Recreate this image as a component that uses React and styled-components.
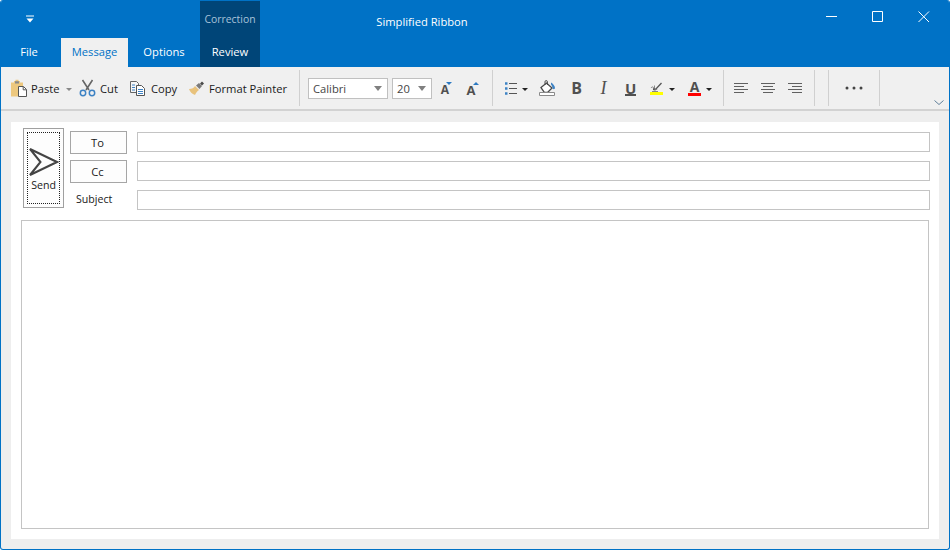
import React from 'react';
import styled, { createGlobalStyle } from 'styled-components';

const GlobalStyle = createGlobalStyle`
	html, body {
		margin: 0;
		padding: 0;
		background: #fff;
	}
	* {
		box-sizing: border-box;
	}
`;

const Window = styled.div`
	width: 950px;
	height: 550px;
	display: flex;
	flex-direction: column;
	background: #eeeeee;
	border: 1px solid #0072c6;
	border-top: 0;
	border-radius: 3px;
	overflow: hidden;
	font-family: 'Open Sans', 'Noto Sans', sans-serif;
	font-size: 11.2px;
	color: #1a1a1a;
`;

const Header = styled.div`
	height: 67px;
	flex: none;
	display: flex;
	background: #0072c6;
	color: #fff;
`;

const LeftTabs = styled.div`
	width: 199px;
	display: flex;
	flex-direction: column;
`;

const Qat = styled.div`
	height: 38px;
	padding: 15px 0 0 25px;
`;

const TabRow = styled.div`
	height: 29px;
	display: flex;
`;

const Tab = styled.div`
	width: ${p => p.$w}px;
	display: flex;
	align-items: center;
	justify-content: center;
	padding-bottom: 3px;
	padding-right: ${p => p.$shift || 0}px;
	background: ${p => (p.$active ? '#f0f0f0' : 'transparent')};
	color: ${p => (p.$active ? '#0072c6' : '#fff')};
`;

const ContextGroup = styled.div`
	width: 60px;
	margin-top: 1px;
	display: flex;
	flex-direction: column;
	background: #004578;
`;

const ContextLabel = styled.div`
	height: 37px;
	padding-top: 11px;
	text-align: center;
	font-size: 10.4px;
	color: #a9c3d8;
`;

const ContextTab = styled.div`
	height: 29px;
	display: flex;
	align-items: center;
	justify-content: center;
	padding-bottom: 3px;
`;

const Title = styled.div`
	width: 92px;
	margin: 14px 0 0 116px;
	height: 18px;
	white-space: nowrap;
	text-align: center;
`;

const WindowControls = styled.div`
	margin: 1px 2px 0 auto;
	display: flex;
	height: 32px;
`;

const ControlButton = styled.div`
	width: 46px;
	display: flex;
	align-items: center;
	justify-content: center;
`;

const Ribbon = styled.div`
	height: 44px;
	flex: none;
	display: flex;
	align-items: center;
	background: #f0f0f0;
	border-bottom: 2px solid #d2d2d2;
`;

const Group = styled.div`
	display: flex;
	align-items: center;
	padding-left: ${p => p.$pad || 0}px;
`;

const Separator = styled.div`
	width: 1px;
	height: 36px;
	flex: none;
	background: #d0d0d0;
`;

const Tool = styled.div`
	width: ${p => p.$w}px;
	height: 22px;
	flex: none;
	display: flex;
	align-items: center;
	justify-content: ${p => (p.$center ? 'center' : 'flex-start')};
	gap: ${p => p.$gap ?? 4}px;
	white-space: nowrap;
`;

const Combo = styled.div`
	width: ${p => p.$w}px;
	height: 21px;
	margin-right: 4px;
	flex: none;
	display: flex;
	align-items: center;
	justify-content: space-between;
	padding: 0 5px 0 4px;
	background: #fff;
	border: 1px solid #c0c0c0;
	color: #444;
`;

const Caret = styled.span`
	width: 0;
	height: 0;
	flex: none;
	margin-left: ${p => p.$ml || 0}px;
	margin-top: 2px;
	border-left: 3px solid transparent;
	border-right: 3px solid transparent;
	border-top: 3px solid ${p => p.$color || '#222'};
`;

const ComboCaret = styled(Caret)`
	margin-top: 0;
	border-left-width: 4px;
	border-right-width: 4px;
	border-top: 5px solid #808080;
`;

const Glyph = styled.span`
	width: ${p => p.$w || 14}px;
	display: block;
	position: relative;
	text-align: center;
	font-family: ${p => (p.$serif ? "'Liberation Serif', serif" : "'Open Sans', sans-serif")};
	font-size: ${p => p.$size || 16}px;
	font-weight: ${p => p.$weight || 700};
	font-style: ${p => (p.$italic ? 'italic' : 'normal')};
	line-height: ${p => p.$line || 18}px;
	color: #505050;
`;

const SizeGlyph = styled(Glyph)`
	margin-top: 3px;
	margin-left: 4px;
`;

const SizeArrow = styled.span`
	position: absolute;
	top: -1px;
	left: ${p => p.$left}px;
	width: 0;
	height: 0;
	border-left: 3px solid transparent;
	border-right: 3px solid transparent;
	${p => (p.$up ? 'border-bottom: 3px solid #2b79c2;' : 'border-top: 3px solid #2b79c2;')}
`;

const Underbar = styled.span`
	display: block;
	height: ${p => p.$h || 2}px;
	margin-top: ${p => p.$mt ?? 0}px;
	background: ${p => p.$color || '#505050'};
`;

const Chevron = styled.div`
	margin-left: auto;
	align-self: flex-end;
	height: 9px;
	padding-right: 5px;
	line-height: 0;
`;

const Panel = styled.div`
	flex: 1;
	margin: 11px 10px 10px 10px;
	padding: 6px 10px 10px 10px;
	display: flex;
	flex-direction: column;
	background: #fff;
`;

const Compose = styled.div`
	display: flex;
	padding-left: 2px;
`;

const SendButton = styled.div`
	width: 41px;
	height: 80px;
	padding: 3px;
	flex: none;
	background: #fdfdfd;
	border: 1px solid #a0a0a0;
`;

const SendFocus = styled.div`
	height: 100%;
	display: flex;
	flex-direction: column;
	align-items: center;
	justify-content: flex-end;
	padding: 0 0 11px;
	gap: 2px;
	border: 1px dotted #222;
	font-size: 10.6px;
`;

const Fields = styled.div`
	flex: 1;
	margin: 3px 0 0 6px;
	display: grid;
	grid-template-columns: 57px 1fr;
	grid-template-rows: 23px 23px 21px;
	column-gap: 10px;
	row-gap: 6px;
`;

const AddressButton = styled.div`
	display: flex;
	align-items: center;
	justify-content: center;
	padding-right: 2px;
	background: #fdfdfd;
	border: 1px solid #a6a6a6;
`;

const FieldLabel = styled.div`
	display: flex;
	align-items: center;
	padding: 0 0 1px 6px;
	font-size: 10.6px;
`;

const Field = styled.div`
	height: 20px;
	margin-top: 1px;
	margin-right: -1px;
	background: #fff;
	border: 1px solid #c4c4c4;
`;

const Memo = styled.div`
	flex: 1;
	margin-top: 10px;
	background: #fff;
	border: 1px solid #c4c4c4;
`;

const Icon = ({ w = 16, h = 16, children }) => (
	<svg width={w} height={h} viewBox={`0 0 ${w} ${h}`} fill="none" style={{ flex: 'none', display: 'block' }}>
		{children}
	</svg>
);

const PasteIcon = () => (
	<Icon w={18} h={18}>
		<path d="M1 3.5h3V2h1.5V.8h3V2H10v1.5h3v4H8.5v10H1z" fill="#edc87e" />
		<path d="M5 2.2h4v2.2H5z" fill="#8a8a8a" />
		<path d="M8.5 7.5h5l3 3v7h-8z" fill="#fff" stroke="#555" />
		<path d="M13.2 7.8v3h3" stroke="#555" />
	</Icon>
);

const CutIcon = () => (
	<Icon w={17} h={18}>
		<path d="M3.5 1l6.5 10M13.5 1L7 11" stroke="#666" strokeWidth="1.6" />
		<circle cx="4" cy="14" r="2.7" stroke="#3d82c4" strokeWidth="1.5" />
		<circle cx="13" cy="14" r="2.7" stroke="#3d82c4" strokeWidth="1.5" />
	</Icon>
);

const CopyIcon = () => (
	<Icon w={17} h={17}>
		<path d="M1.500 1.500h6l2 2v9h-8z" fill="#f6f6f6" stroke="#666" />
		<path d="M7.500 5.500h5l3 3v7h-8z" fill="#fff" stroke="#555" />
		<path d="M3 5h3M3 7.500h3M3 10h3" stroke="#3d82c4" />
		<path d="M9 9.500h5M9 11.500h5M9 13.500h5" stroke="#3d82c4" />
	</Icon>
);

const PainterIcon = () => (
	<Icon w={17} h={15}>
		<path d="M1 8c3 0 5-1 6-3l4 4c-2 1-3 3-4 5-3-1-5-3-6-6z" fill="#e8c27c" />
		<path d="M8 4.500l3-2.500 3 3-2.500 3z" fill="#7a7a7a" />
		<path d="M12 2.500l2-2 2 2-2 2z" fill="#4a4a4a" />
	</Icon>
);

const BulletsIcon = () => (
	<Icon w={12} h={13}>
		<path d="M4 1.500h8M4 6.500h8M4 11.500h8" stroke="#555" />
		<path d="M0 .3h2.500v2.500H0zM0 5.300h2.500v2.500H0zM0 10.300h2.500v2.500H0z" fill="#3d82c4" />
	</Icon>
);

const FillIcon = () => (
	<Icon w={17} h={16}>
		<path d="M2 7.500L7.500 3l5.500 5-4.500 4.500h-3z" fill="#fff" stroke="#4a4a4a" strokeWidth="1.3" />
		<path d="M6 5V1.800a1.200 1.200 0 0 1 2.400 0V5" stroke="#4a4a4a" />
		<path d="M12 2.500c2 1 4 3.500 4 5.500 0 1.500-2.500 1.500-2.500 0 0-1-1-3-1.500-3.500z" fill="#3d82c4" />
		<path d="M.5 12.500h15v3H.5z" fill="#fff" stroke="#8a8a8a" />
	</Icon>
);

const HighlightIcon = () => (
	<Icon w={13} h={13}>
		<path d="M1 6c.8-1.500 2.500-1.500 2.500 0v2M4.500 3.500V8c1-1 2.500-1 2.500 0" stroke="#888" />
		<path d="M3 7.500l3-.5 5.500-6" stroke="#555" strokeWidth="1.300" />
		<path d="M5 7.500v2M2 9.500h6" stroke="#888" />
		<path d="M0 10h13v3H0z" fill="#ffff00" />
	</Icon>
);

const AlignIcon = ({ mode }) => {
	const x = mode === 'left' ? 0 : mode === 'center' ? 2 : 4;
	return (
		<Icon w={14} h={12}>
			<path d={`M0 1.500h14M${x} 4.500h10M0 7.500h14M${x} 10.500h10`} stroke="#606060" />
		</Icon>
	);
};

const UnderlineGlyph = () => (
	<span>
		<Glyph $w={11} $size={15} $line={14}>U</Glyph>
		<Underbar $mt={-1} />
	</span>
);

const FontColor = () => (
	<span>
		<Glyph $w={13} $size={14} $line={12}>A</Glyph>
		<Underbar $h={3} $color="#ff0000" />
	</span>
);

export default function App() {
	return (
		<>
			<GlobalStyle />
			<Window>
				<Header>
					<LeftTabs>
						<Qat>
							<Icon w={8} h={8}>
								<path d="M0 1h8" stroke="#fff" />
								<path d="M.5 3.500h7L4 7.500z" fill="#fff" />
							</Icon>
						</Qat>
						<TabRow>
							<Tab $w={60} $shift={4}>File</Tab>
							<Tab $w={67} $active>Message</Tab>
							<Tab $w={72}>Options</Tab>
						</TabRow>
					</LeftTabs>
					<ContextGroup>
						<ContextLabel>Correction</ContextLabel>
						<ContextTab>Review</ContextTab>
					</ContextGroup>
					<Title>Simplified Ribbon</Title>
					<WindowControls>
						<ControlButton>
							<Icon w={12} h={12}><path d="M0 5.500h11" stroke="#fff" /></Icon>
						</ControlButton>
						<ControlButton>
							<Icon w={12} h={12}><path d="M.5.500h10v10H.5z" stroke="#fff" /></Icon>
						</ControlButton>
						<ControlButton>
							<Icon w={12} h={12}><path d="M.5.500l10.500 10.500M11 .500L.5 11" stroke="#fff" /></Icon>
						</ControlButton>
					</WindowControls>
				</Header>

				<Ribbon>
					<Group $pad={9}>
						<Tool $w={69} $gap={3}><PasteIcon />Paste<Caret $ml={3} $color="#888" /></Tool>
						<Tool $w={50}><CutIcon />Cut</Tool>
						<Tool $w={59} $gap={5}><CopyIcon />Copy</Tool>
						<Tool $w={111}><PainterIcon />Format Painter</Tool>
					</Group>
					<Separator />
					<Group $pad={8}>
						<Combo $w={80}>Calibri<ComboCaret /></Combo>
						<Combo $w={40}>20<ComboCaret /></Combo>
						<Tool $w={26} $gap={0}>
							<SizeGlyph $w={10} $size={12} $line={14}>A<SizeArrow $left={6} /></SizeGlyph>
						</Tool>
						<Tool $w={30} $gap={0}>
							<SizeGlyph $w={10} $size={13} $line={14}>A<SizeArrow $left={7} $up /></SizeGlyph>
						</Tool>
					</Group>
					<Separator />
					<Group $pad={12}>
						<Tool $w={34} $gap={5}><BulletsIcon /><Caret $ml={0} /></Tool>
						<Tool $w={32}><FillIcon /></Tool>
						<Tool $w={27}><Glyph $w={11}>B</Glyph></Tool>
						<Tool $w={27}><Glyph $w={11} $size={18} $serif $italic $weight={400}>I</Glyph></Tool>
						<Tool $w={25}><UnderlineGlyph /></Tool>
						<Tool $w={38} $gap={6}><HighlightIcon /><Caret /></Tool>
						<Tool $w={35} $gap={5}><FontColor /><Caret /></Tool>
					</Group>
					<Separator />
					<Group $pad={10}>
						<Tool $w={27}><AlignIcon mode="left" /></Tool>
						<Tool $w={27}><AlignIcon mode="center" /></Tool>
						<Tool $w={26}><AlignIcon mode="right" /></Tool>
					</Group>
					<Separator />
					<Group $pad={13}><Separator /></Group>
					<Tool $w={50} $center>
						<Icon w={18} h={4}>
							<circle cx="2" cy="2" r="1.500" fill="#444" />
							<circle cx="9" cy="2" r="1.500" fill="#444" />
							<circle cx="16" cy="2" r="1.500" fill="#444" />
						</Icon>
					</Tool>
					<Separator />
					<Chevron>
						<Icon w={10} h={6}>
							<path d="M.5.500L5 4.500 9.500.500" stroke="#5f7f99" />
						</Icon>
					</Chevron>
				</Ribbon>

				<Panel>
					<Compose>
						<SendButton>
							<SendFocus>
								<Icon w={30} h={28}>
									<path d="M1 1L28 14 1 27 11.500 14z" stroke="#444" strokeWidth="2" />
								</Icon>
								Send
							</SendFocus>
						</SendButton>
						<Fields>
							<AddressButton>To</AddressButton>
							<Field />
							<AddressButton>Cc</AddressButton>
							<Field />
							<FieldLabel>Subject</FieldLabel>
							<Field />
						</Fields>
					</Compose>
					<Memo />
				</Panel>
			</Window>
		</>
	);
}
